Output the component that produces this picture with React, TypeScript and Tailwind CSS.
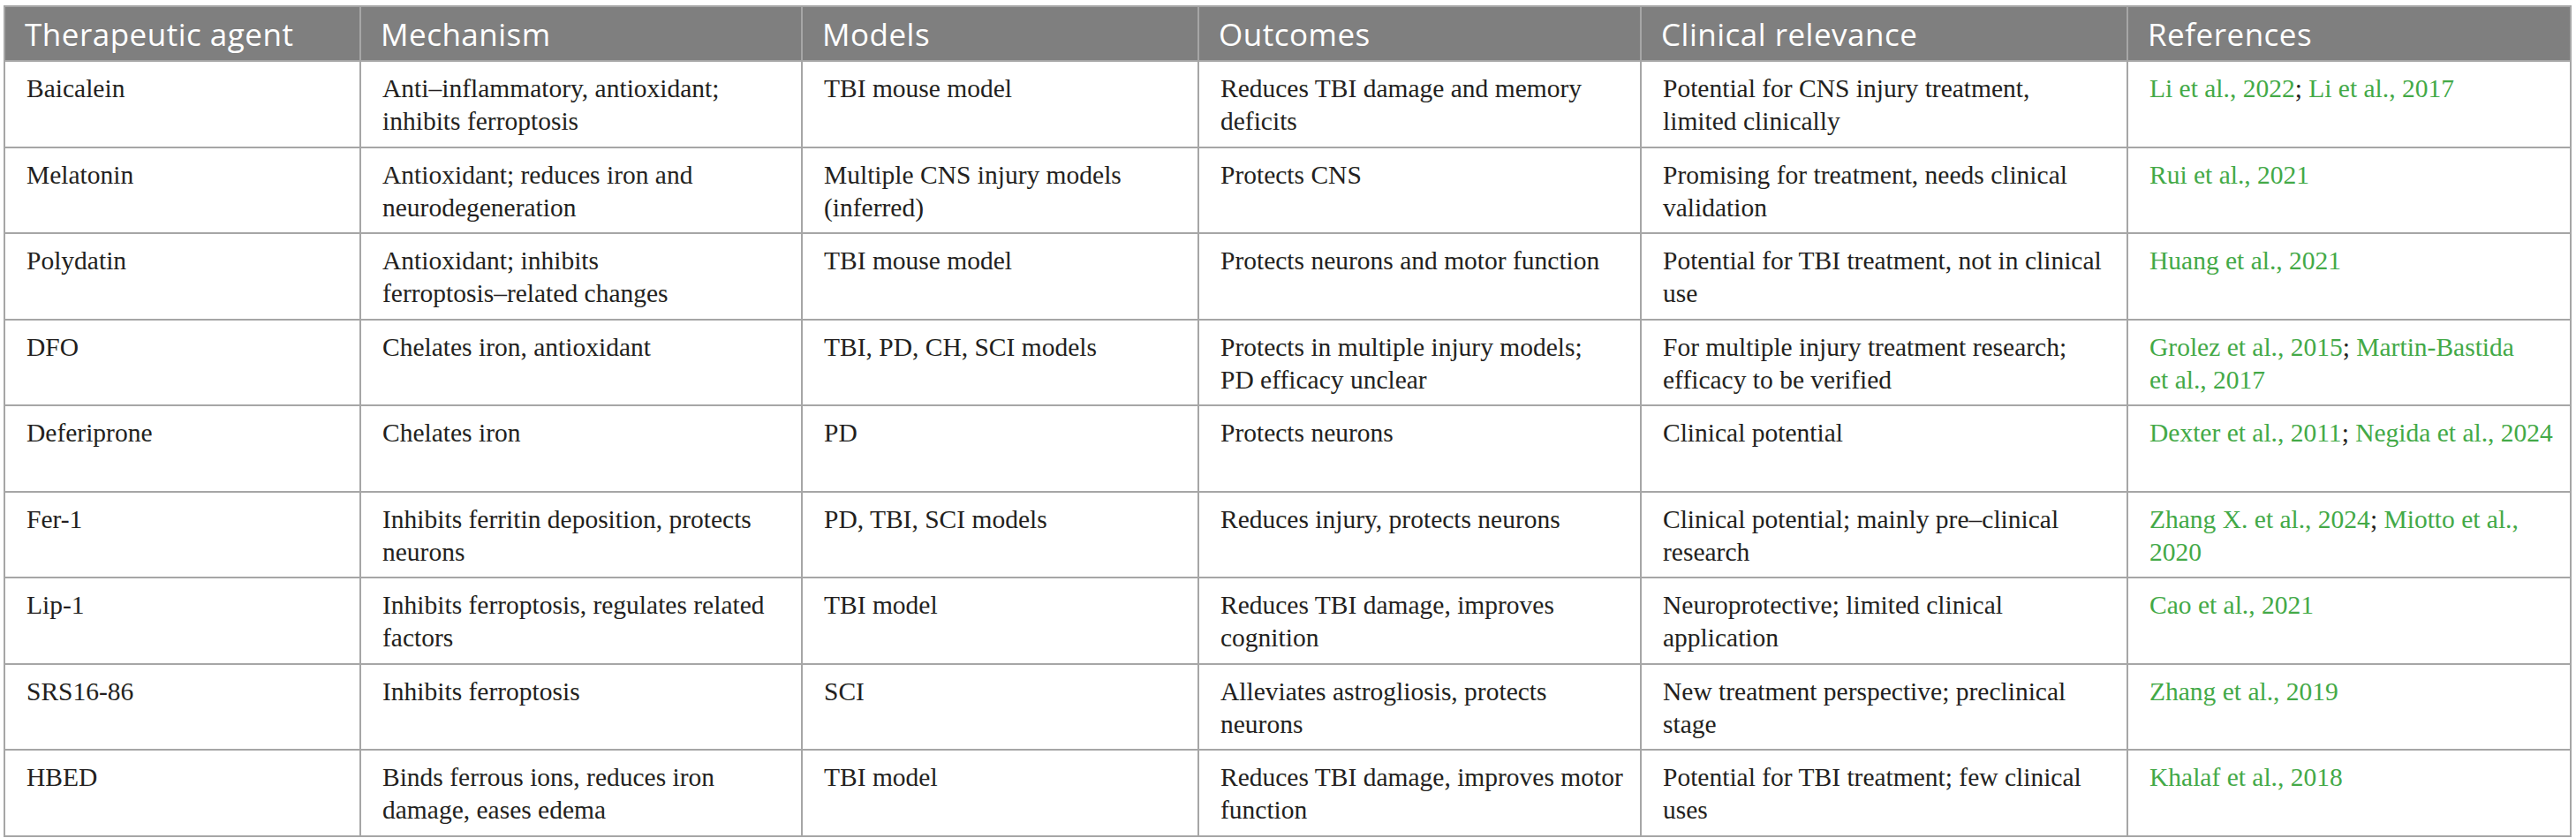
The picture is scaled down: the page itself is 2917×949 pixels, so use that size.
type Ref = { t: string; link?: boolean };

type Row = {
  agent: string;
  mechanism: string[];
  models: string[];
  outcomes: string[];
  relevance: string[];
  refs: Ref[][];
};

const rows: Row[] = [
  {
    agent: "Baicalein",
    mechanism: ["Anti–inflammatory, antioxidant;", "inhibits ferroptosis"],
    models: ["TBI mouse model"],
    outcomes: ["Reduces TBI damage and memory", "deficits"],
    relevance: ["Potential for CNS injury treatment,", "limited clinically"],
    refs: [[{ t: "Li et al., 2022", link: true }, { t: "; " }, { t: "Li et al., 2017", link: true }]],
  },
  {
    agent: "Melatonin",
    mechanism: ["Antioxidant; reduces iron and", "neurodegeneration"],
    models: ["Multiple CNS injury models", "(inferred)"],
    outcomes: ["Protects CNS"],
    relevance: ["Promising for treatment, needs clinical", "validation"],
    refs: [[{ t: "Rui et al., 2021", link: true }]],
  },
  {
    agent: "Polydatin",
    mechanism: ["Antioxidant; inhibits", "ferroptosis–related changes"],
    models: ["TBI mouse model"],
    outcomes: ["Protects neurons and motor function"],
    relevance: ["Potential for TBI treatment, not in clinical", "use"],
    refs: [[{ t: "Huang et al., 2021", link: true }]],
  },
  {
    agent: "DFO",
    mechanism: ["Chelates iron, antioxidant"],
    models: ["TBI, PD, CH, SCI models"],
    outcomes: ["Protects in multiple injury models;", "PD efficacy unclear"],
    relevance: ["For multiple injury treatment research;", "efficacy to be verified"],
    refs: [
      [{ t: "Grolez et al., 2015", link: true }, { t: "; " }, { t: "Martin-Bastida", link: true }],
      [{ t: "et al., 2017", link: true }],
    ],
  },
  {
    agent: "Deferiprone",
    mechanism: ["Chelates iron"],
    models: ["PD"],
    outcomes: ["Protects neurons"],
    relevance: ["Clinical potential"],
    refs: [[{ t: "Dexter et al., 2011", link: true }, { t: "; " }, { t: "Negida et al., 2024", link: true }]],
  },
  {
    agent: "Fer-1",
    mechanism: ["Inhibits ferritin deposition, protects", "neurons"],
    models: ["PD, TBI, SCI models"],
    outcomes: ["Reduces injury, protects neurons"],
    relevance: ["Clinical potential; mainly pre–clinical", "research"],
    refs: [
      [{ t: "Zhang X. et al., 2024", link: true }, { t: "; " }, { t: "Miotto et al.,", link: true }],
      [{ t: "2020", link: true }],
    ],
  },
  {
    agent: "Lip-1",
    mechanism: ["Inhibits ferroptosis, regulates related", "factors"],
    models: ["TBI model"],
    outcomes: ["Reduces TBI damage, improves", "cognition"],
    relevance: ["Neuroprotective; limited clinical", "application"],
    refs: [[{ t: "Cao et al., 2021", link: true }]],
  },
  {
    agent: "SRS16-86",
    mechanism: ["Inhibits ferroptosis"],
    models: ["SCI"],
    outcomes: ["Alleviates astrogliosis, protects", "neurons"],
    relevance: ["New treatment perspective; preclinical", "stage"],
    refs: [[{ t: "Zhang et al., 2019", link: true }]],
  },
  {
    agent: "HBED",
    mechanism: ["Binds ferrous ions, reduces iron", "damage, eases edema"],
    models: ["TBI model"],
    outcomes: ["Reduces TBI damage, improves motor", "function"],
    relevance: ["Potential for TBI treatment; few clinical", "uses"],
    refs: [[{ t: "Khalaf et al., 2018", link: true }]],
  },
];

const headers = [
  "Therapeutic agent",
  "Mechanism",
  "Models",
  "Outcomes",
  "Clinical relevance",
  "References",
];

function Lines({ lines }: { lines: string[] }) {
  return (
    <>
      {lines.map((l, i) => (
        <div key={i} className="whitespace-nowrap">
          {l}
        </div>
      ))}
    </>
  );
}

export default function App() {
  const cell =
    "border-2 border-[#a6a6a6] align-top pl-[24px] pr-1 pt-[12px] text-[29.5px] leading-[37px] text-[#231f20]";
  return (
    <div className="bg-white w-[2917px] h-[949px] pt-[6px] pl-[4px] font-['Liberation_Serif',serif]">
      <table className="table-fixed border-collapse w-[2906px] border-2 border-[#a6a6a6]">
        <colgroup>
          <col className="w-[403px]" />
          <col className="w-[500px]" />
          <col className="w-[449px]" />
          <col className="w-[501px]" />
          <col className="w-[551px]" />
          <col className="w-[502px]" />
        </colgroup>
        <thead>
          <tr className="h-[62px] bg-[#7f7f7f]">
            {headers.map((h) => (
              <th
                key={h}
                className="border-2 border-[#a6a6a6] text-left font-normal pl-[22px] text-white text-[35px] tracking-[0.5px] leading-none font-['Open_Sans',sans-serif] whitespace-nowrap"
              >
                {h}
              </th>
            ))}
          </tr>
        </thead>
        <tbody>
          {rows.map((r) => (
            <tr key={r.agent} className="h-[97.5px]">
              <td className={cell}>{r.agent}</td>
              <td className={cell}>
                <Lines lines={r.mechanism} />
              </td>
              <td className={cell}>
                <Lines lines={r.models} />
              </td>
              <td className={cell}>
                <Lines lines={r.outcomes} />
              </td>
              <td className={cell}>
                <Lines lines={r.relevance} />
              </td>
              <td className={cell}>
                {r.refs.map((line, i) => (
                  <div key={i} className="whitespace-nowrap">
                    {line.map((seg, j) => (
                      <span key={j} className={seg.link ? "text-[#43a947]" : ""}>
                        {seg.t}
                      </span>
                    ))}
                  </div>
                ))}
              </td>
            </tr>
          ))}
        </tbody>
      </table>
    </div>
  );
}
